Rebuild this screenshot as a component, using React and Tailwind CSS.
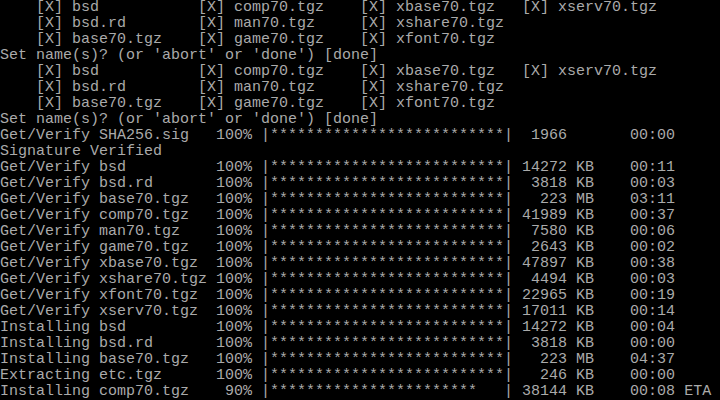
import React from "react";

const pad = (s, n) => s + " ".repeat(Math.max(0, n - s.length));
const lpad = (s, n) => " ".repeat(Math.max(0, n - s.length)) + s;

const sel = (a, b, c, d) =>
  "    " + pad(a, 18) + pad(b, 18) + (d ? pad(c, 18) + d : c);

const prog = (label, pct, size, unit, time, eta) => {
  const stars = Math.floor((26 * pct) / 100);
  return {
    pre: pad(label, 24) + lpad(pct + "%", 4) + " |",
    stars: "*".repeat(stars),
    post:
      " ".repeat(26 - stars) +
      "| " +
      lpad(size, 5) +
      " " +
      pad(unit, 2) +
      "    " +
      time +
      (eta ? " ETA" : ""),
  };
};

const SET = "Set name(s)? (or 'abort' or 'done') [done]";

const lines = [
  sel("[X] bsd", "[X] comp70.tgz", "[X] xbase70.tgz", "[X] xserv70.tgz"),
  sel("[X] bsd.rd", "[X] man70.tgz", "[X] xshare70.tgz"),
  sel("[X] base70.tgz", "[X] game70.tgz", "[X] xfont70.tgz"),
  SET,
  sel("[X] bsd", "[X] comp70.tgz", "[X] xbase70.tgz", "[X] xserv70.tgz"),
  sel("[X] bsd.rd", "[X] man70.tgz", "[X] xshare70.tgz"),
  sel("[X] base70.tgz", "[X] game70.tgz", "[X] xfont70.tgz"),
  SET,
  prog("Get/Verify SHA256.sig", 100, "1966", "", "00:00"),
  "Signature Verified",
  prog("Get/Verify bsd", 100, "14272", "KB", "00:11"),
  prog("Get/Verify bsd.rd", 100, "3818", "KB", "00:03"),
  prog("Get/Verify base70.tgz", 100, "223", "MB", "03:11"),
  prog("Get/Verify comp70.tgz", 100, "41989", "KB", "00:37"),
  prog("Get/Verify man70.tgz", 100, "7580", "KB", "00:06"),
  prog("Get/Verify game70.tgz", 100, "2643", "KB", "00:02"),
  prog("Get/Verify xbase70.tgz", 100, "47897", "KB", "00:38"),
  prog("Get/Verify xshare70.tgz", 100, "4494", "KB", "00:03"),
  prog("Get/Verify xfont70.tgz", 100, "22965", "KB", "00:19"),
  prog("Get/Verify xserv70.tgz", 100, "17011", "KB", "00:14"),
  prog("Installing bsd", 100, "14272", "KB", "00:04"),
  prog("Installing bsd.rd", 100, "3818", "KB", "00:00"),
  prog("Installing base70.tgz", 100, "223", "MB", "04:37"),
  prog("Extracting etc.tgz", 100, "246", "KB", "00:00"),
  prog("Installing comp70.tgz", 90, "38144", "KB", "00:08", true),
];

export default function App() {
  return (
    <div className="w-[720px] h-[400px] bg-black overflow-hidden">
      <div className="flex flex-col font-['Liberation_Mono',monospace] text-[15px] text-[#aaaaaa] whitespace-pre">
        {lines.map((l, i) => (
          <div key={i} className="h-[16px] leading-[16px]">
            {typeof l === "string" ? (
              l
            ) : (
              <>
                {l.pre}
                <span>{l.stars}</span>
                {l.post}
              </>
            )}
          </div>
        ))}
      </div>
    </div>
  );
}
